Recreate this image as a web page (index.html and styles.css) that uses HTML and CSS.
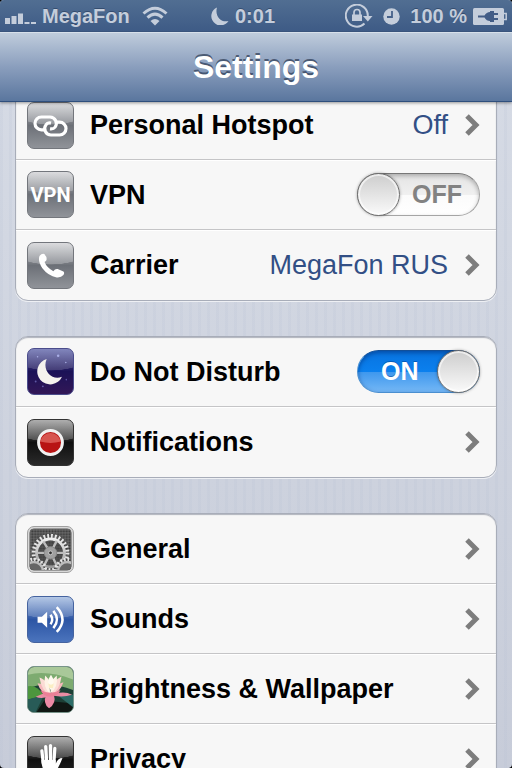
FILE: index.html
```html
<!DOCTYPE html>
<html lang="en">
<head>
  <meta charset="UTF-8">
  <meta name="viewport" content="width=device-width, initial-scale=1">
  <title>Settings</title>
  <link rel="stylesheet" href="styles.css">
</head>
<body>
  <header class="top">
    <div class="status">
      <div class="status-left">
        <svg class="signal" width="31" height="11" viewBox="0 0 31 11" fill="currentColor">
          <path d="M0 5h5v6H0zM6.500 3h5v8h-5zM13 0.500h5V11h-5zM19.500 9h5v2h-5zM26 9h5v2h-5z"/>
        </svg>
        <span>MegaFon</span>
        <svg class="wifi" width="26" height="20" viewBox="0 0 26 20" fill="none" stroke="currentColor" stroke-width="3">
          <path d="M1.500 7.500Q13 -3 24.500 7.500M5.500 11.700Q13 4.500 20.500 11.700"/>
          <path d="M8.500 15Q13 11 17.500 15L13 19.500z" fill="currentColor" stroke="none"/>
        </svg>
      </div>
      <div class="status-center">
        <svg width="18" height="18" viewBox="0 0 18 18" fill="currentColor">
          <path d="M6 0.500A9.300 9.300 0 1 0 17.500 14C10 16 3.500 9 6 0.500z"/>
        </svg>
        <span>0:01</span>
      </div>
      <div class="status-right">
        <svg width="28" height="24" viewBox="0 0 28 24">
          <path d="M19.500 19.500A11 11 0 1 1 22.800 12" fill="none" stroke="currentColor" stroke-width="2"/>
          <path d="M18 12h9.500l-4.700 5.500z" fill="currentColor"/>
          <path d="M7 10.500h10V17H7z" fill="currentColor"/>
          <path d="M9 11V8.500a3 3 0 0 1 6 0V11" fill="none" stroke="currentColor" stroke-width="1.700"/>
        </svg>
        <svg width="17" height="17" viewBox="0 0 17 17">
          <circle cx="8.500" cy="8.500" r="8.200" fill="currentColor"/>
          <path d="M9 3v6H4" fill="none" stroke="#46618a" stroke-width="1.800"/>
        </svg>
        <span>100 %</span>
        <svg width="34" height="17" viewBox="0 0 34 17">
          <path d="M1.500 0h28q1.500 0 1.500 1.500v14q0 1.500-1.500 1.500h-28Q0 17 0 15.500v-14Q0 0 1.500 0z" fill="currentColor"/>
          <path d="M31 5.500h2.200v6H31" fill="none" stroke="currentColor" stroke-width="1.500"/>
          <path d="M5 7.500h6.500Q13.500 4 17 4V3h4v2h4v2h-4v3h4v2h-4v2h-4v-1Q13.500 13 11.500 9.500H5z" fill="#425c86"/>
        </svg>
      </div>
    </div>
    <div class="navbar">
      <h1>Settings</h1>
    </div>
  </header>

  <main class="settings">
    <ul class="group">
      <li>
        <a class="row" href="#hotspot">
          <span class="icon gray">
            <svg viewBox="0 0 47 47" fill="none" stroke="#fff" stroke-width="3.300">
              <path d="M18.500 28H14a6.700 6.700 0 0 1 0-13.400h9a6.700 6.700 0 0 1 5.300 10.600Q26.500 27.500 23 27"/>
              <path d="M28.500 20H33a6.700 6.700 0 0 1 0 13.400h-9a6.700 6.700 0 0 1-5.300-10.600Q20.500 20 24 21"/>
            </svg>
          </span>
          <span class="label">Personal Hotspot</span>
          <span class="value">Off</span>
          <svg class="chevron" viewBox="0 0 15 22"><path d="M2 2l9 9-9 9"/></svg>
        </a>
      </li>
      <li class="row">
        <span class="icon gray vpn">VPN</span>
        <label class="label" for="vpn">VPN</label>
        <span class="switch">
          <input type="checkbox" id="vpn">
          <span class="off">OFF</span>
          <span class="on">ON</span>
        </span>
      </li>
      <li>
        <a class="row" href="#carrier">
          <span class="icon gray">
            <svg viewBox="0 0 47 47" fill="#fff">
              <path d="M12 13.500Q14.500 10.500 17 11.500Q19.500 14 19.500 17Q19.500 18.500 17.300 19.800Q19.500 25.500 26.500 29.500Q28.500 26.500 31 27.200L37 29.700Q38.500 31 37 33.500Q34.500 36.500 30 36Q21 34.500 15 26.500Q10 19 12 13.500z"/>
            </svg>
          </span>
          <span class="label">Carrier</span>
          <span class="value">MegaFon RUS</span>
          <svg class="chevron" viewBox="0 0 15 22"><path d="M2 2l9 9-9 9"/></svg>
        </a>
      </li>
    </ul>

    <ul class="group">
      <li class="row">
        <span class="icon night">
          <svg viewBox="0 0 47 47" fill="#fff">
            <path d="M19.500 10.500A13.500 13.500 0 1 0 35.500 29C24.500 33.500 14.500 22 19.500 10.500z" fill="#f5f3ee"/>
            <g fill="#a9aee6">
              <circle cx="31.500" cy="7" r="1.300"/>
              <circle cx="10" cy="8" r=".8"/>
              <circle cx="39.500" cy="14" r=".8"/>
            </g>
            <g fill="#5f58a4">
              <circle cx="8" cy="34" r="1"/>
              <circle cx="15.500" cy="39" r="1"/>
              <circle cx="40" cy="32" r=".8"/>
            </g>
          </svg>
        </span>
        <label class="label" for="dnd">Do Not Disturb</label>
        <span class="switch">
          <input type="checkbox" id="dnd" checked>
          <span class="off">OFF</span>
          <span class="on">ON</span>
        </span>
      </li>
      <li>
        <a class="row" href="#notifications">
          <span class="icon black">
            <svg viewBox="0 0 47 47">
              <circle cx="23.500" cy="23.500" r="12.500" fill="#b81414" stroke="#f1f1f1" stroke-width="3"/>
              <path d="M12.800 22.500a10.900 10.900 0 0 1 21.400 0q-10.500 3-21.400 0z" fill="#d75550"/>
            </svg>
          </span>
          <span class="label">Notifications</span>
          <svg class="chevron" viewBox="0 0 15 22"><path d="M2 2l9 9-9 9"/></svg>
        </a>
      </li>
    </ul>

    <ul class="group">
      <li>
        <a class="row" href="#general">
          <span class="icon steel">
            <svg viewBox="0 0 47 47">
              <defs>
                <pattern id="mesh" width="3" height="3" patternUnits="userSpaceOnUse">
                  <rect width="3" height="3" fill="#6a6a6a"/>
                  <circle cx="1.500" cy="1.500" r="1.100" fill="#333"/>
                </pattern>
                <linearGradient id="metal" x1="0" y1="0" x2="0" y2="1">
                  <stop offset="0" stop-color="#eee"/>
                  <stop offset="1" stop-color="#999"/>
                </linearGradient>
                <clipPath id="plate"><rect x="2" y="2" width="43" height="43" rx="4"/></clipPath>
              </defs>
              <rect x="2" y="2" width="43" height="43" rx="4" fill="url(#mesh)" stroke="#666"/>
              <g clip-path="url(#plate)" fill="none">
                <circle cx="23.500" cy="27" r="17.500" stroke="#e6e6e6" stroke-width="4.500" stroke-dasharray="1.900 2.027"/>
                <circle cx="23.500" cy="27" r="14.500" stroke="url(#metal)" stroke-width="3"/>
                <circle cx="23.500" cy="27" r="13" fill="#444" fill-opacity=".6"/>
                <path d="M23.500 27L16 15M23.500 27L30 14.500M23.500 27H38M23.500 27H9M23.500 27L17 40M23.500 27L30 40" stroke="#bbb" stroke-width="2.500"/>
                <circle cx="23.500" cy="27" r="6.500" fill="#a0a0a0" stroke="#888"/>
                <circle cx="23.500" cy="27" r="2" fill="#333" stroke="#ccc"/>
                <g stroke="#e6e6e6" stroke-width="4" stroke-dasharray="1.800 1.964">
                  <circle cx="6" cy="46" r="12" fill="#444"/>
                  <circle cx="41" cy="46" r="12" fill="#444"/>
                </g>
                <g stroke="#bbb" stroke-width="2.500">
                  <circle cx="6" cy="46" r="9.500" fill="#666"/>
                  <circle cx="41" cy="46" r="9.500" fill="#666"/>
                </g>
              </g>
            </svg>
          </span>
          <span class="label">General</span>
          <svg class="chevron" viewBox="0 0 15 22"><path d="M2 2l9 9-9 9"/></svg>
        </a>
      </li>
      <li>
        <a class="row" href="#sounds">
          <span class="icon blue">
            <svg viewBox="0 0 47 47">
              <path d="M10 20.500h4.500L20 15.500v16.500L14.500 27H10z" fill="#fff"/>
              <g fill="none" stroke="#fff" stroke-width="2.600">
                <path d="M23.500 18.500q3.500 5 0 10"/>
                <path d="M26.500 14.500q7.500 9 0 18"/>
                <path d="M30 10.500q12 13 0 26"/>
              </g>
            </svg>
          </span>
          <span class="label">Sounds</span>
          <svg class="chevron" viewBox="0 0 15 22"><path d="M2 2l9 9-9 9"/></svg>
        </a>
      </li>
      <li>
        <a class="row" href="#wallpaper">
          <span class="icon lotus">
            <svg viewBox="0 0 47 47">
              <path d="M0 0H47V20Q22 10 0 20z" fill="#a9c899"/>
              <path d="M0 8Q20 3 47 13V24Q22 14 0 22z" fill="#7dab70"/>
              <path d="M0 20Q9 18 17 30L0 34z" fill="#4d963e"/>
              <path d="M0 34L17 29L8 47H0z" fill="#285b57"/>
              <path d="M17 35L47 38V47H9z" fill="#101713"/>
              <path d="M29 28L47 29V42z" fill="#2d6c68"/>
              <path d="M18 27L8 31Q15 34 22 30zM29 28Q38 25 46 29Q37 32 27 30z" fill="#e98ca4"/>
              <path d="M19 29Q15 38 22 43Q30 38 27 29z" fill="#ec8aa5"/>
              <path d="M10 17Q19 17 22 29Q13 27 10 17zM37 16Q28 18 24 29Q33 28 37 16z" fill="#f6b8bd"/>
              <path d="M12 11Q22 14 23 29Q14 25 12 11zM35 10Q25 14 24 29Q33 25 35 10z" fill="#fbdcd5"/>
              <path d="M18 9Q26 16 23 28Q15 21 18 9zM30 9Q21 16 23 28Q32 22 30 9z" fill="#fff3e6"/>
              <path d="M24 8Q30 16 23.500 24Q18 16 24 8z" fill="#fffaf0"/>
              <path d="M21 17q3 3 6 0l-1 5h-4z" fill="#fbeec4"/>
              <path d="M13 24Q23 30 34 24Q31 31 23 31Q16 31 13 24z" fill="#ea8096"/>
            </svg>
          </span>
          <span class="label">Brightness &amp; Wallpaper</span>
          <svg class="chevron" viewBox="0 0 15 22"><path d="M2 2l9 9-9 9"/></svg>
        </a>
      </li>
      <li>
        <a class="row" href="#privacy">
          <span class="icon black">
            <svg viewBox="0 0 47 47" fill="none" stroke="#fff" stroke-width="3.400" stroke-linecap="round">
              <path d="M14.500 14.500l1.500 13M18.500 10l1 16M23.500 9v17M28 12l-1 15"/>
              <path d="M14 24h15v4q2-6 7-6Q33 30 29 36v8H18v-7q-4-5-4-13z" fill="#fff" stroke="none"/>
            </svg>
          </span>
          <span class="label">Privacy</span>
          <svg class="chevron" viewBox="0 0 15 22"><path d="M2 2l9 9-9 9"/></svg>
        </a>
      </li>
    </ul>
  </main>
</body>
</html>
```

FILE: styles.css
```css
* {
  box-sizing: border-box;
}

html {
  overflow: hidden;
  background: #000;
}

body {
  display: flex;
  flex-direction: column;
  height: 100vh;
  margin: 0;
  overflow: hidden;
  border-radius: 4px;
  background: linear-gradient(#d7dce6, #c7ccd9);
  font-family: "Liberation Sans", Helvetica, Arial, sans-serif;
  font-size: 27px;
  line-height: 32px;
  color: #000;
}

/* status bar and title */
.top {
  position: relative;
  z-index: 1;
  flex: none;
  box-shadow: 0 1px 3px rgba(0, 0, 0, .4);
}

.status {
  display: grid;
  grid-template-columns: 1fr auto 1fr;
  align-items: center;
  height: 32px;
  padding: 0 5px;
  background: linear-gradient(#516e92, #3e5b86);
  border-bottom: 1px solid #39547c;
  color: #c4cddb;
  font-size: 20px;
  font-weight: bold;
  text-shadow: 0 -1px 0 rgba(30, 50, 80, .5);
}

.status-left,
.status-center,
.status-right {
  display: flex;
  align-items: center;
  gap: 6px;
}

.status-center {
  padding-right: 26px;
}

.status-right {
  justify-content: flex-end;
  gap: 10px;
}

.status-right svg:last-child {
  margin-left: -4px;
}

.signal {
  margin-top: 5px;
}

.wifi {
  margin-left: 6px;
}

.navbar {
  height: 70px;
  padding-top: 15px;
  background: linear-gradient(#bfccdc, #8a9ebd 50%, #5a769e);
  border-top: 1px solid #d7e0ea;
  border-bottom: 1px solid #2f4f7d;
  text-align: center;
}

.navbar h1 {
  margin: 0;
  font-size: 32px;
  line-height: 38px;
  color: #fff;
  text-shadow: 0 -2px 0 rgba(50, 65, 90, .75);
}

/* the page is scrolled a little, so the first group starts under the bar */
.settings {
  flex: 1;
  margin-top: -13px;
  padding: 0 15px;
  overflow: hidden;
  background: repeating-linear-gradient(90deg, rgba(180, 190, 210, .16) 0 3px, transparent 3px 9px);
}

.group {
  margin: 0 0 35px;
  padding: 0;
  list-style: none;
  background: #f7f7f7;
  border: 1px solid #a8adb9;
  border-radius: 13px;
  box-shadow: 0 1px 0 #eef0f4, inset 0 1px 1px rgba(130, 135, 150, .6);
}

.group li {
  height: 70px;
  border-bottom: 1px solid #c5c5c7;
}

.group li + li {
  box-shadow: inset 0 1px 0 #fff;
}

.group li:last-child {
  border-bottom: 0;
}

.row {
  display: flex;
  align-items: center;
  height: 70px;
  padding: 0 16px 0 11px;
  color: #000;
  text-decoration: none;
}

.label {
  flex: 1;
  margin-left: 16px;
  font-weight: bold;
  white-space: nowrap;
}

.value {
  margin-right: 17px;
  color: #324f85;
}

.chevron {
  width: 15px;
  height: 22px;
  fill: none;
  stroke: #7d7d7d;
  stroke-width: 5;
}

/* icons */
.icon {
  flex: none;
  width: 47px;
  height: 47px;
  border: 1px solid #73767c;
  border-radius: 7px;
  overflow: hidden;
}

.icon svg {
  display: block;
  width: 100%;
  height: 100%;
}

.gray {
  background:
    radial-gradient(ellipse 100% 48% at 50% 0, rgba(255, 255, 255, .25) 98%, transparent),
    linear-gradient(#cfd0d3, #6c7077 50%, #909399);
}

.vpn {
  color: #fff;
  font-family: Roboto, "Liberation Sans", sans-serif;
  font-size: 20px;
  font-weight: bold;
  line-height: 47px;
  text-align: center;
}

.night {
  border-color: #4b4d8c;
  background:
    radial-gradient(ellipse 100% 48% at 50% 0, rgba(255, 255, 255, .16) 98%, transparent),
    linear-gradient(#6a6fb0, #1b1257 50%, #321757);
}

.black {
  border-color: #333;
  background:
    radial-gradient(ellipse 100% 48% at 50% 0, rgba(255, 255, 255, .22) 98%, transparent),
    linear-gradient(#989898, #101010 50%, #2a2a2a);
}

.blue {
  border-color: #45639f;
  background:
    radial-gradient(ellipse 100% 48% at 50% 0, rgba(255, 255, 255, .18) 98%, transparent),
    linear-gradient(#a3bbe0, #2c55a4 50%, #4b74bd);
}

.steel {
  border-color: #a0a0a0;
  background: #d8d8d8;
}

.lotus {
  border-color: #78948a;
  background: #1d4036;
}

/* switches */
.switch {
  position: relative;
  width: 123px;
  height: 43px;
}

.switch input {
  appearance: none;
  display: flex;
  width: 100%;
  height: 100%;
  margin: 0;
  border: 1px solid #a5a5a5;
  border-top-color: #777;
  border-radius: 22px;
  background: linear-gradient(#e4e4e4, #f0f0f0 50%, #fbfbfb 52%, #fff);
  box-shadow: inset 0 2px 4px rgba(0, 0, 0, .25);
}

.switch input::before {
  content: "";
  width: 43px;
  height: 43px;
  margin: -1px;
  border: 1px solid #6f6f6f;
  border-radius: 50%;
  background: linear-gradient(#cdcdcd, #fafafa);
  box-shadow: inset 0 0 0 2px rgba(255, 255, 255, .6), 0 0 3px rgba(0, 0, 0, .35);
  box-sizing: border-box;
}

.switch input:checked {
  justify-content: flex-end;
  border-color: #4a8fd0;
  border-top-color: #124f98;
  background: linear-gradient(#0873df, #0b80ee 50%, #3f98ee 52%, #74b7f5);
  box-shadow: inset 0 2px 4px rgba(0, 40, 110, .5);
}

.on,
.off {
  position: absolute;
  top: 0;
  font-size: 25px;
  font-weight: bold;
  line-height: 43px;
  pointer-events: none;
}

.off {
  right: 18px;
  color: #828282;
}

.on {
  left: 24px;
  color: #fff;
  text-shadow: 0 -1px 0 rgba(0, 60, 140, .5);
}

.switch input:checked ~ .off,
.switch input:not(:checked) ~ .on {
  display: none;
}
```
